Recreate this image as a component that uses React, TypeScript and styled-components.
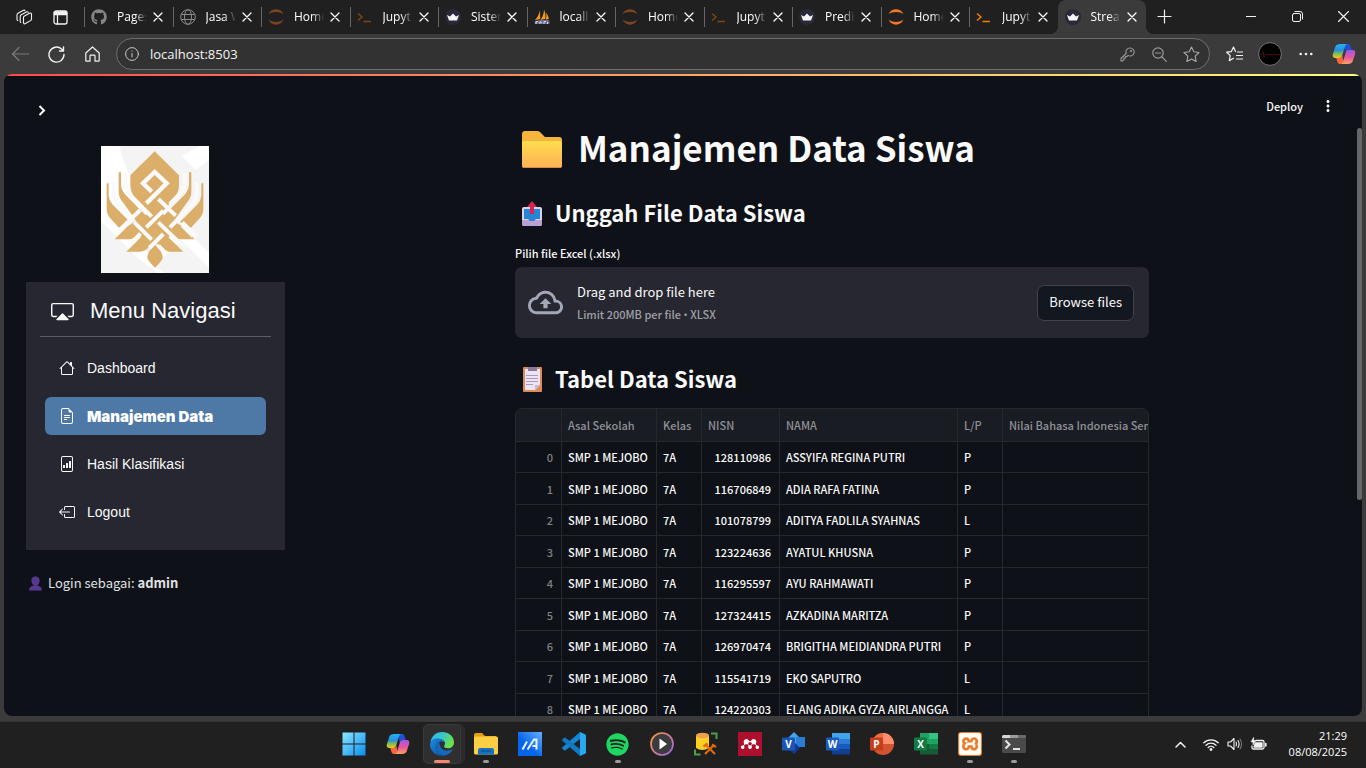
import React from "react";
import styled, { createGlobalStyle, css } from "styled-components";
import { FaGithub, FaSpotify } from "react-icons/fa";
import { BsCast, BsHouse, BsFileEarmarkText, BsFileBarGraph, BsBoxArrowLeft } from "react-icons/bs";
import { MdOutlineCloudUpload, MdMoreVert } from "react-icons/md";
import { SiXampp, SiMendeley } from "react-icons/si";

const shell = `"Open Sans", "Noto Sans", sans-serif`;
const source = `"Noto Sans CJK SC", "Noto Sans", sans-serif`;
const arial = `"Liberation Sans", Arial, sans-serif`;

const GlobalStyle = createGlobalStyle`
  * { box-sizing: border-box; }
  body { margin: 0; background: #202020; overflow: hidden; }
  button { border: 0; background: none; padding: 0; color: inherit; font: inherit; }
  svg { display: block; flex: none; }
`;

const Desktop = styled.div`
  display: flex;
  flex-direction: column;
  height: 100vh;
  color: #fff;
  font-family: ${shell};
`;

/* ---------- Browser window ---------- */

const TabStrip = styled.header`
  display: flex;
  height: 34px;
  background: #202020;
`;

const StripTools = styled.div`
  display: flex;
  align-items: center;
  width: 84px;
  padding-left: 6px;
`;

const IconButton = styled.button<{ $w?: number; $dim?: boolean }>`
  display: flex;
  align-items: center;
  justify-content: center;
  width: ${(p) => p.$w ?? 36}px;
  height: 32px;
  flex: none;
  color: ${(p) => (p.$dim ? "#7a7a7a" : "#f2f2f2")};
`;

const Tabs = styled.div`
  display: grid;
  grid-template-columns: repeat(12, 1fr);
  flex: 1;
`;

const TabItem = styled.div<{ $active?: boolean }>`
  position: relative;
  display: flex;
  align-items: center;
  min-width: 0;
  padding-left: 7px;
  ${(p) =>
    p.$active
      ? css`
          background: #3b3b3b;
          border-radius: 8px 8px 0 0;
          &::before,
          &::after {
            content: "";
            position: absolute;
            bottom: 0;
            width: 8px;
            height: 8px;
          }
          &::before {
            left: -8px;
            background: radial-gradient(circle at 0 0, transparent 8px, #3b3b3b 8px);
          }
          &::after {
            right: -8px;
            background: radial-gradient(circle at 100% 0, transparent 8px, #3b3b3b 8px);
          }
        `
      : css`
          &::before {
            content: "";
            position: absolute;
            left: 0;
            top: 7px;
            width: 1px;
            height: 20px;
            background: #666;
          }
        `}
`;

const TabLabel = styled.button`
  display: flex;
  align-items: center;
  gap: 10px;
  min-width: 0;
`;

const TabTitle = styled.span`
  width: 30px;
  overflow: hidden;
  white-space: nowrap;
  text-align: left;
  font-size: 12px;
  line-height: 18px;
  mask-image: linear-gradient(90deg, #000 60%, transparent 100%);
`;

const TabClose = styled.button`
  display: flex;
  margin-left: 6px;
`;

const WindowControls = styled.div`
  display: flex;
  justify-content: space-between;
  width: 220px;
`;

const CaptionButtons = styled.div`
  display: flex;
`;

const Toolbar = styled.div`
  display: flex;
  align-items: center;
  height: 40px;
  padding: 0 2px;
  background: #3b3b3b;
`;

const AddressBar = styled.div`
  display: flex;
  align-items: center;
  flex: 1;
  height: 32px;
  margin: 0 6px;
  padding: 0 2px 0 8px;
  border: 1px solid #6d6d6d;
  border-radius: 16px;
  background: #323232;
`;

const AddressInput = styled.input`
  flex: 1;
  min-width: 0;
  margin-left: 11px;
  padding: 0;
  border: 0;
  outline: 0;
  background: none;
  color: #f4f4f4;
  font-family: ${shell};
  font-size: 13px;
`;

const Frame = styled.div`
  display: flex;
  flex: 1;
  min-height: 0;
  padding: 0 4px 5px;
  background: #3b3b3b;
`;

const Viewport = styled.div`
  position: relative;
  display: flex;
  flex: 1;
  overflow: hidden;
  border-radius: 8px;
  background: #0e1117;
  color: #fafafa;
  font-family: ${source};
`;

const Decoration = styled.div`
  position: absolute;
  inset: 0 0 auto;
  height: 2px;
  background: linear-gradient(90deg, #ff4b4b, #fffd80);
`;

const ScrollThumb = styled.div`
  position: absolute;
  top: 54px;
  right: 0;
  width: 5px;
  height: 58%;
  border-radius: 3px;
  background: #66676b;
`;

/* ---------- Sidebar ---------- */

const Sidebar = styled.aside`
  display: flex;
  flex-direction: column;
  flex: none;
  width: 298px;
  padding: 22px 17px 0 22px;
`;

const CollapseButton = styled.button`
  display: flex;
  align-items: center;
  justify-content: center;
  width: 32px;
  height: 28px;
`;

const LogoBox = styled.div`
  display: flex;
  margin: 22px 0 9px 75px;
`;

const Menu = styled.nav`
  padding: 14px 14px 19px;
  background: #262730;
  font-family: ${arial};
`;

const MenuTitle = styled.div`
  display: flex;
  align-items: center;
  gap: 16px;
  height: 41px;
  padding: 0 0 10px 11px;
  border-bottom: 1px solid #5c5d65;
  font-size: 22px;
  line-height: 30px;
`;

const MenuList = styled.ul`
  display: flex;
  flex-direction: column;
  gap: 10px;
  margin: 12px 5px 0;
  padding: 0;
  list-style: none;
`;

const MenuLink = styled.a<{ $active?: boolean }>`
  display: flex;
  align-items: center;
  gap: 12px;
  height: 38px;
  padding: 0 14px;
  border-radius: 6px;
  color: #fafafa;
  text-decoration: none;
  font-size: 14px;
  ${(p) =>
    p.$active &&
    css`
      background: #4e79a7;
      color: #fff;
      font-family: Inter, sans-serif;
      font-size: 15px;
      font-weight: 900;
    `}
`;

const LoginNote = styled.p`
  display: flex;
  align-items: center;
  gap: 5px;
  margin: 23px 0 0 2px;
  font-size: 13px;
  line-height: 20px;
  color: #e0e0e3;
`;

/* ---------- Main column ---------- */

const Main = styled.main`
  flex: 1;
  min-width: 0;
`;

const AppHeader = styled.div`
  display: flex;
  justify-content: flex-end;
  align-items: center;
  gap: 16px;
  height: 52px;
  padding: 12px 25px 0 0;
  font-size: 11px;
  font-weight: 500;
  line-height: 18px;
`;

const Column = styled.div`
  width: 100%;
  max-width: 634px;
  margin: 0 auto;
`;

const Title = styled.h1`
  display: flex;
  align-items: flex-start;
  gap: 16px;
  height: 46px;
  margin: 0;
  padding-left: 7px;
  font-size: 35px;
  font-weight: 700;
  line-height: 42px;

  svg { margin-top: 5px; }
`;

const Subtitle = styled.h2`
  display: flex;
  align-items: flex-start;
  gap: 12px;
  height: 30px;
  margin: 26px 0 0;
  padding-left: 7px;
  font-size: 22px;
  font-weight: 600;
  line-height: 28px;

  svg { margin-top: 3px; }
`;

const FieldLabel = styled.label`
  display: block;
  margin: 16px 0 5px;
  font-size: 11px;
  font-weight: 500;
  line-height: 18px;
`;

const HiddenInput = styled.input`
  position: absolute;
  width: 1px;
  height: 1px;
  opacity: 0;
`;

const Dropzone = styled.section`
  display: flex;
  align-items: center;
  gap: 14px;
  height: 71px;
  padding: 0 15px 0 13px;
  border-radius: 7px;
  background: #262730;
  color: #a3a8b8;
`;

const DropText = styled.div`
  flex: 1;
  padding-top: 1px;
  color: #fafafa;
  font-size: 13px;
  line-height: 22px;
`;

const DropHint = styled.small`
  display: block;
  color: #a0a0a6;
  font-size: 11px;
  font-weight: 500;
  line-height: 22px;
`;

const Bullet = styled.span`
  font-family: ${shell};
`;

const BrowseButton = styled.button`
  height: 36px;
  padding: 0 11px 2px;
  border: 1px solid #41434b;
  border-radius: 7px;
  background: #131720;
  color: #fafafa;
  font-size: 13px;
`;

const TableFrame = styled.div`
  margin-top: 14px;
  overflow: hidden;
  border: 1px solid #26282e;
  border-radius: 7px;
`;

const Table = styled.table`
  width: 790px;
  table-layout: fixed;
  border-spacing: 0;
  font-size: 11px;
  line-height: 16px;
  white-space: nowrap;

  th,
  td {
    padding: 0 8px 0 6px;
    border-right: 1px solid #26282e;
    border-bottom: 1px solid #26282e;
    text-align: left;
    font-weight: 500;
  }
  thead th {
    height: 33px;
    background: #1a1c23;
    color: #8f9197;
  }
  tbody tr { height: 32px; }
  tbody tr:nth-child(odd) { height: 31px; }
  tbody th {
    color: #7f8186;
    text-align: right;
  }
  td:nth-child(4) { text-align: right; }
`;

/* ---------- Taskbar ---------- */

const Taskbar = styled.footer`
  display: grid;
  grid-template-columns: 1fr auto 1fr;
  height: 47px;
  padding-bottom: 2px;
  background: #202020;
  border-top: 1px solid #343434;
`;

const Dock = styled.div`
  grid-column: 2;
  display: flex;
  padding-left: 1px;
`;

const DockButton = styled.button<{ $state?: "open" | "active" }>`
  position: relative;
  display: flex;
  align-items: center;
  justify-content: center;
  width: 44px;
  height: 44px;
  ${(p) =>
    p.$state &&
    css`
      &::after {
        content: "";
        position: absolute;
        left: 50%;
        bottom: 3px;
        width: ${p.$state === "active" ? 16 : 6}px;
        height: 3px;
        border-radius: 2px;
        background: ${p.$state === "active" ? "#f7886c" : "#9a9a9a"};
        transform: translateX(-50%);
      }
    `}
  ${(p) =>
    p.$state === "active" &&
    css`
      &::before {
        content: "";
        position: absolute;
        inset: 2px 3px 2px 3px;
        border: 1px solid #3a3a3a;
        border-radius: 5px;
        background: #2f2f2f;
        box-shadow: 4px 0 0 #2b2b2b;
      }
    `}
  svg { position: relative; }
`;

const Tray = styled.div`
  display: flex;
  align-items: center;
  justify-content: flex-end;
  padding-right: 19px;
`;

const Clock = styled.time`
  margin-left: 18px;
  text-align: right;
  font-size: 11px;
  line-height: 16px;
`;

/* ---------- Drawings ---------- */

const line = { fill: "none", stroke: "currentColor", strokeLinecap: "round", strokeLinejoin: "round" } as const;

const CloseGlyph = () => (
  <svg width="10" height="10" viewBox="0 0 10 10" {...line} strokeWidth="1.3"><path d="M1 1l8 8M9 1L1 9" /></svg>
);

const JupyterIcon = ({ dim }: { dim?: boolean }) => (
  <svg width="16" height="16" viewBox="0 0 16 16" fill={dim ? "#7d4420" : "#f37726"}>
    <path d="M.6 5.400C1.800 2 4.700.300 8 .300s6.200 1.700 7.400 5.100C13.700 3.800 11 3 8 3S2.300 3.800.600 5.400z" />
    <path d="M.6 10.600C1.800 14 4.700 15.700 8 15.700s6.200-1.700 7.400-5.100C13.700 12.200 11 13 8 13s-5.700-.8-7.400-2.400z" />
  </svg>
);

const PromptIcon = ({ dim }: { dim?: boolean }) => (
  <svg width="16" height="16" viewBox="0 0 16 16" fill="none" stroke={dim ? "#7b460f" : "#f57c00"} strokeWidth="1.500">
    <path d="M1 4.500l4 3.500-4 3.500M6.500 12.500H14" />
  </svg>
);

const CrownIcon = () => (
  <svg width="16" height="16" viewBox="0 0 16 16">
    <circle cx="8" cy="8" r="8" fill="#2a2939" />
    <path d="M2 6l3 1.500L8 4.500l3 3L14 6l-2 5.500H4z" fill="#f6f6f6" />
  </svg>
);

const GlobeIcon = () => (
  <svg width="16" height="16" viewBox="0 0 16 16" fill="none" stroke="#8a8a8a" strokeWidth="1">
    <circle cx="8" cy="8" r="7.300" /><ellipse cx="8" cy="8" rx="3.500" ry="7.300" /><path d="M1.300 5.500h13.400M1.300 10.500h13.400" />
  </svg>
);

const SailIcon = () => (
  <svg width="16" height="16" viewBox="0 0 16 16">
    <path d="M6 1Q5 7 .8 11.200L6.200 10zM10 .3Q10 6 6.500 11l5-1.200Q12 5 10 .3zM12 3.500q2.500 3 2.800 6.500l-3 .8Q13 7 12 3.500z" fill="#f39a20" />
    <path d="M.5 12.500q7-3 15-1v3.500H1z" fill="#6a6c94" />
    <path d="M2 15v-2.500h2M6 15v-2.500l2 1.500M10 15v-2.500h2M13.500 13v2" stroke="#d5d6ea" fill="none" />
  </svg>
);

const CopilotIcon = ({ size }: { size: number }) => (
  <svg width={size} height={size} viewBox="0 0 24 24">
    <defs>
      <linearGradient id="cpA" x1="0" y1="0" x2="0" y2="1"><stop offset="0" stopColor="#21b4ee" /><stop offset=".45" stopColor="#2b8fe0" /><stop offset=".7" stopColor="#7fc04c" /><stop offset="1" stopColor="#f5c321" /></linearGradient>
      <linearGradient id="cpB" x1="0" y1="0" x2="0" y2="1"><stop offset="0" stopColor="#a554e8" /><stop offset=".55" stopColor="#e9589a" /><stop offset="1" stopColor="#ffa35c" /></linearGradient>
    </defs>
    <path d="M12.500 2h3.700c1.500 0 2 1 2.400 2.200L19.800 8h-3.300c-1.600 0-2.500.8-3 2.400z" fill="#1f50d8" />
    <path d="M11.500 22H7.800c-1.500 0-2-1-2.400-2.200L4.200 16h3.300c1.600 0 2.500-.8 3-2.400z" fill="#f7683a" />
    <path d="M8.400 2h7.100c-1.300 0-2 1-2.500 2.600l-2.800 9C9.700 15.200 8.800 16 7.200 16H3.400C.9 16 .2 14.200.9 12L3.400 4.500C4 2.900 5.500 2 8.400 2z" fill="url(#cpA)" />
    <path d="M15.600 22H8.500c1.300 0 2-1 2.500-2.600l2.800-9C14.300 8.800 15.200 8 16.800 8h3.800c2.500 0 3.200 1.800 2.500 4l-2.500 7.500c-.6 1.600-2.100 2.500-5 2.500z" fill="url(#cpB)" />
  </svg>
);

const SchoolLogo = () => (
  <svg width="108" height="127" viewBox="0 0 324 381" role="img" aria-label="Logo">
    <rect width="324" height="381" fill="#fff" />
    <path d="M55 0h240l-52 30 40 42 41-30v278L180 180V381H0V225l60 20L150 160Q80 110 55 0z" fill="#f4f4f4" />
    <path d="M0 225L110 335l60 46h30L60 235z" fill="#fff" />
    <path d="M190 381l-30-20 80-80 84 84v16z" fill="#f4f4f4" />
    <g fill="#dbae6a">
      <path d="M161 16L234 88v30q0 22-16 40L161 225 104 158Q88 140 88 118V88z" />
      <path d="M53 79h7v38q1 16 14 30l110 112-35 28L68 172Q53 156 53 138z" />
      <path d="M271 79h-7v38q-1 16-14 30L138 259l37 28 81-115q15-16 15-34z" />
      <path d="M17 112h6v36q2 18 14 30l50 50-33 17-24-26Q17 205 17 188z" />
      <path d="M307 112h-6v36q-2 18-14 30l-50 50 33 17 24-26q13-14 13-31z" />
      <path d="M162 190l80 50 39 40h-44q-15-1-25-12l-50 30-50-30q-10 11-25 12H41l40-40z" />
      <path d="M76 317l84-84 87 84h-42q-15-2-25-14l-18-18-18 18q-10 12-25 14z" />
      <path d="M162 297q23 20 23 37 0 10-23 31-23-21-23-31 0-17 23-37z" />
    </g>
    <g fill="none" stroke="#fafafa" strokeWidth="12">
      <path d="M152 137l-26-25 35-34 36 34-61 60" strokeWidth="13" />
      <path d="M74 82v34q2 18 16 34l62 62M251 82v34q-2 18-45 58M38 108v36q2 18 14 32l32 34M287 108v36q-2 18-14 32l-66 68" />
      <path d="M172 159l52 50M118 192l-64 62M187 194l-51 50M100 229l52 52M172 229l64 62q10 8 20 8M244 229l42 42M187 264l-42 42M118 262q-16 22-35 26M172 299l20 20M244 238l32 32" />
    </g>
  </svg>
);

const FolderEmoji = () => (
  <svg width="40" height="37" viewBox="0 0 40 37">
    <defs><linearGradient id="fold" x2="0" y2="1"><stop stopColor="#ffdd4e" /><stop offset="1" stopColor="#fdb055" /></linearGradient></defs>
    <path d="M0 3q0-3 3-3h12q2 0 3 1l5 5h14q3 0 3 3v8H0z" fill="#f5b53c" />
    <rect y="10" width="40" height="27" rx="2" fill="url(#fold)" />
    <path d="M1 36.500h38" stroke="#d98848" />
  </svg>
);

const OutboxEmoji = () => (
  <svg width="21" height="25" viewBox="0 0 21 25">
    <rect y="6" width="20" height="19" rx="2" fill="#dcd3e9" />
    <path d="M0 19h20v4q0 2-2 2H2q-2 0-2-2z" fill="#b9a1d4" />
    <path d="M2 8h16v10h-4l-2 2H8l-2-2H2z" fill="#2586d8" />
    <path d="M10 0l5 6h-3v7H8V6H5z" fill="#d9244f" />
  </svg>
);

const ClipboardEmoji = () => (
  <svg width="21" height="25" viewBox="0 0 21 25">
    <rect x="1" width="19" height="25" rx="1" fill="#dc8a56" />
    <path d="M3 2h15v16l-5 5H3z" fill="#ece4f4" />
    <path d="M18 18l-5 5v-5z" fill="#c9b8de" />
    <path d="M6 0h9v4H6z" fill="#8a7a9a" />
    <path d="M4 8.500h12M4 11.500h12M4 14.500h12M4 17.500h7" stroke="#a79bb8" />
  </svg>
);

const PersonEmoji = () => (
  <svg width="15" height="15" viewBox="0 0 15 15" fill="#57378f">
    <path d="M7.500.5c3 0 4.500 2 4 5-.4 2.500-2 4.500-4 4.500s-3.600-2-4-4.500c-.5-3 1-5 4-5z" />
    <path d="M1 14.500c0-4 3-4.500 5-5h3c2 .5 5 1 5 5z" />
  </svg>
);

const Office = ({ letter, dark, children }: { letter: string; dark: string; children: React.ReactNode }) => (
  <svg width="24" height="24" viewBox="0 0 24 24">
    {children}
    <rect y="5.500" width="13" height="13" rx="1" fill={dark} />
    <text x="6.500" y="15.500" textAnchor="middle" fontFamily="Open Sans" fontWeight="700" fontSize="10" fill="#fff">{letter}</text>
  </svg>
);

/* ---------- Data ---------- */

const tabs: { title: string; icon: React.ReactNode; active?: boolean }[] = [
  { title: "Pages", icon: <FaGithub size={16} color="#858585" /> },
  { title: "Jasa W", icon: <GlobeIcon /> },
  { title: "Home", icon: <JupyterIcon dim /> },
  { title: "Jupyt", icon: <PromptIcon dim /> },
  { title: "Sister", icon: <CrownIcon /> },
  { title: "locall", icon: <SailIcon /> },
  { title: "Home", icon: <JupyterIcon dim /> },
  { title: "Jupyt", icon: <PromptIcon dim /> },
  { title: "Predi", icon: <CrownIcon /> },
  { title: "Home", icon: <JupyterIcon /> },
  { title: "Jupyt", icon: <PromptIcon /> },
  { title: "Strea", icon: <CrownIcon />, active: true },
];

const menu = [
  { label: "Dashboard", Icon: BsHouse },
  { label: "Manajemen Data", Icon: BsFileEarmarkText, active: true },
  { label: "Hasil Klasifikasi", Icon: BsFileBarGraph },
  { label: "Logout", Icon: BsBoxArrowLeft },
];

const columns: [string, number][] = [
  ["", 46], ["Asal Sekolah", 95], ["Kelas", 45], ["NISN", 78], ["NAMA", 178], ["L/P", 45],
  ["Nilai Bahasa Indonesia Semester 1", 303],
];

const students = [
  ["128110986", "ASSYIFA REGINA PUTRI", "P"],
  ["116706849", "ADIA RAFA FATINA", "P"],
  ["101078799", "ADITYA FADLILA SYAHNAS", "L"],
  ["123224636", "AYATUL KHUSNA", "P"],
  ["116295597", "AYU RAHMAWATI", "P"],
  ["127324415", "AZKADINA MARITZA", "P"],
  ["126970474", "BRIGITHA MEIDIANDRA PUTRI", "P"],
  ["115541719", "EKO SAPUTRO", "L"],
  ["124220303", "ELANG ADIKA GYZA AIRLANGGA", "L"],
];

const dock: { name: string; state?: "open" | "active"; icon: React.ReactNode }[] = [
  { name: "Start", icon: (
    <svg width="24" height="24" viewBox="0 0 24 24">
      <defs><linearGradient id="win" x2="1" y2="1"><stop stopColor="#8be8ff" /><stop offset="1" stopColor="#0a8cf0" /></linearGradient></defs>
      <path d="M.5.5h11v11H.5zM12.500.5h11v11h-11zM.5 12.500h11v11H.5zM12.500 12.500h11v11h-11z" fill="url(#win)" />
    </svg>) },
  { name: "Copilot", icon: <CopilotIcon size={24} /> },
  { name: "Edge", state: "active", icon: (
    <svg width="24" height="24" viewBox="0 0 24 24">
      <defs>
        <linearGradient id="edA" x2="1" y2=".4"><stop stopColor="#2fb4ea" /><stop offset=".5" stopColor="#33c8d0" /><stop offset="1" stopColor="#6be04a" /></linearGradient>
        <linearGradient id="edB" x2="1" y2="1"><stop stopColor="#1a8ae0" /><stop offset="1" stopColor="#0d4f9e" /></linearGradient>
      </defs>
      <path d="M.5 10C1.500 4 6 0 12 0c7 0 12 4.500 12 10.500 0 3.500-2.700 5.800-6 5.800-2.500 0-4-1-4-2 0-.8 1-1.200 1-3 0-2.500-3-4.300-6.500-4.300C4.500 7 1.500 8.500.5 10z" fill="url(#edA)" />
      <path d="M.3 10.500C1.500 7.500 5 6 8.500 6.500c4 .5 6.500 3 6.500 5-.5-1.300-2-2-3.500-2-3 0-5 2.500-5 6 0 4 3.500 7.500 7.500 8C6 25 0 19 0 12.500z" fill="url(#edB)" />
      <path d="M9.500 10.200c-2 1.200-3 3.300-3 5.300 0 4.500 4 8 8.500 8 3.300-.8 6-2.600 7.600-5.300.3-.5-.1-.8-.6-.6-5.500 2.400-12.500.6-12.500-7.400z" fill="#1368bf" />
    </svg>) },
  { name: "File Explorer", state: "open", icon: (
    <svg width="24" height="24" viewBox="0 0 24 24">
      <path d="M0 3q0-2 2-2h6l3 3h11v6H0z" fill="#e0a010" />
      <rect y="4.500" width="24" height="18" rx="1.500" fill="#fdcf45" />
      <path d="M4 22.500V18q0-2 2-2h12q2 0 2 2v4.500z" fill="#1673c4" /><path d="M7 19h10" stroke="#0c559a" strokeWidth="1.500" />
    </svg>) },
  { name: "MyASUS", icon: (
    <svg width="24" height="24" viewBox="0 0 24 24">
      <defs><linearGradient id="asus" x1="0" y1="1" x2="1" y2="0"><stop offset=".4" stopColor="#0565e8" /><stop offset="1" stopColor="#68adff" /></linearGradient></defs>
      <rect width="24" height="24" fill="url(#asus)" />
      <path d="M4.500 17.500l4.500-8M9.500 17.500L16 7.500h2.500v10M14.500 14h3" fill="none" stroke="#e8f2ff" strokeWidth="2" />
    </svg>) },
  { name: "Visual Studio Code", icon: (
    <svg width="24" height="24" viewBox="0 0 24 24">
      <path d="M18 0l5 2.300q1 .5 1 1.500v16.400q0 1-1 1.500L18 24z" fill="#29a8f2" />
      <path d="M18 0v7L3.500 18.300q-.7.500-1.300 0L.4 16.700q-.7-.7 0-1.400z" fill="#1286d4" />
      <path d="M18 24v-7L3.500 5.700q-.7-.5-1.300 0L.4 7.300q-.7.700 0 1.400z" fill="#0f79c6" />
    </svg>) },
  { name: "Spotify", state: "open", icon: <FaSpotify size={23} color="#1ed760" /> },
  { name: "Media Player", icon: (
    <svg width="24" height="24" viewBox="0 0 24 24">
      <defs><linearGradient id="med" x2="1" y2="1"><stop stopColor="#ff9b3d" /><stop offset="1" stopColor="#9a62e0" /></linearGradient></defs>
      <circle cx="12" cy="12" r="11" fill="#3b3b40" stroke="url(#med)" strokeWidth="1.700" /><path d="M9.500 6.500v11l7.500-5.500z" fill="#fff" />
    </svg>) },
  { name: "Database Tools", icon: (
    <svg width="24" height="24" viewBox="0 0 24 24">
      <path d="M2 4v12q6 4 13 0V4z" fill="#fbcf24" /><ellipse cx="8.500" cy="3.500" rx="6.500" ry="2.700" fill="#f0a04c" />
      <path d="M17 1.500h5.500V7M1 17.500v5h5.500" fill="none" stroke="#4ba046" strokeWidth="2" />
      <path d="M11 22l9-9M12 13l9 9M9.500 14.500l4-3M18 12.500l4 2.500" stroke="#e4690b" strokeWidth="2.200" />
    </svg>) },
  { name: "Mendeley", icon: (
    <svg width="24" height="24" viewBox="0 0 24 24"><rect width="24" height="24" fill="#ad0f2c" /><SiMendeley x={3} y={3} size={18} color="#fff" /></svg>) },
  { name: "Visio", icon: (
    <Office letter="V" dark="#1b55b8"><path d="M12 0l7 7-7 7-7-7z" fill="#41a5ee" /><path d="M14 5h9v10h-9z" fill="#2b7cd3" /><path d="M12 10l6 6-6 6-6-6z" fill="#12398f" /></Office>) },
  { name: "Word", icon: (
    <Office letter="W" dark="#1a5bbd"><path d="M6 1h18v6H6z" fill="#41a5ee" /><path d="M6 7h18v5H6z" fill="#2b7cd3" /><path d="M6 12h18v5H6z" fill="#185abd" /><path d="M6 17h18v5.500H6z" fill="#103f91" /></Office>) },
  { name: "PowerPoint", icon: (
    <Office letter="P" dark="#c43e1c"><circle cx="13" cy="12" r="11" fill="#d35230" /><path d="M13 1v11h11A11 11 0 0013 1z" fill="#ff8f6b" /><path d="M13 1v11H2A11 11 0 0113 1z" fill="#ed6c47" /></Office>) },
  { name: "Excel", icon: (
    <Office letter="X" dark="#107c41"><path d="M6 1h9v11H6z" fill="#21a366" /><path d="M15 1h9v6h-9z" fill="#33c481" /><path d="M15 7h9v5h-9z" fill="#21a366" /><path d="M6 12h9v10.500H6z" fill="#185c37" /><path d="M15 12h9v5h-9z" fill="#107c41" /><path d="M15 17h9v5.500h-9z" fill="#185c37" /></Office>) },
  { name: "XAMPP", state: "open", icon: (
    <svg width="24" height="24" viewBox="0 0 24 24"><rect width="24" height="24" rx="3" fill="#f07a24" /><SiXampp x={1} y={1} size={22} color="#fff" /></svg>) },
  { name: "Terminal", state: "open", icon: (
    <svg width="24" height="24" viewBox="0 0 24 24">
      <rect y="3" width="24" height="18" rx="1.500" fill="#4a4a4a" /><path d="M0 6V4.500Q0 3 1.500 3H8v3z" fill="#d4d4d4" /><path d="M8 3h8v3H8z" fill="#9b9b9b" /><path d="M16 3h8v3h-8z" fill="#6a6a6a" />
      <path d="M3.500 8.500l4 4-4 4" fill="none" stroke="#e8e8e8" strokeWidth="2" /><path d="M11 17h7" stroke="#fff" strokeWidth="1.700" />
    </svg>) },
];

export default function App() {
  return (
    <Desktop>
      <GlobalStyle />
      <TabStrip>
        <StripTools>
          <IconButton aria-label="Workspaces">
            <svg width="17" height="17" viewBox="0 0 17 17" {...line} strokeWidth="1.100">
              <path d="M7.500 8.500q0-1 1-1.500l5-2.700q2-.8 2 1V10q0 1-1 1.600l-5 2.900q-2 1-2-1zM4.800 13.500q-.6-.3-.6-1.200V7.500q0-1 1-1.700L10.500 3q1.200-.5 1.700.3M1.800 11.500q-.8-.3-.8-1.300V5.800q0-1 1-1.600L7 1.400q1.500-.7 2 .3" />
            </svg>
          </IconButton>
          <IconButton aria-label="Tab actions">
            <svg width="15" height="15" viewBox="0 0 15 15" {...line} strokeWidth="1.300">
              <rect x="1" y="1" width="13" height="13" rx="2" /><path d="M1.500 2h12v2.500h-12z" fill="currentColor" /><path d="M4.500 5v9" />
            </svg>
          </IconButton>
        </StripTools>
        <Tabs>
          {tabs.map((t, i) => (
            <TabItem key={i} $active={t.active}>
              <TabLabel>{t.icon}<TabTitle>{t.title}</TabTitle></TabLabel>
              <TabClose aria-label={`Close ${t.title}`}><CloseGlyph /></TabClose>
            </TabItem>
          ))}
        </Tabs>
        <WindowControls>
          <IconButton aria-label="New tab">
            <svg width="15" height="15" viewBox="0 0 15 15" {...line} strokeWidth="1.200"><path d="M7.500 1v13M1 7.500h13" /></svg>
          </IconButton>
          <CaptionButtons>
            <IconButton $w={46} aria-label="Minimize"><svg width="10" height="10" viewBox="0 0 10 10" {...line}><path d="M0 5.500h10" /></svg></IconButton>
            <IconButton $w={46} aria-label="Restore">
              <svg width="11" height="11" viewBox="0 0 11 11" {...line}><rect x=".5" y="2.500" width="8" height="8" rx="1.500" /><path d="M3 .5h5q2.500 0 2.500 2.500v5" /></svg>
            </IconButton>
            <IconButton $w={46} aria-label="Close"><svg width="11" height="11" viewBox="0 0 11 11" {...line} strokeWidth="1.200"><path d="M.5.5l10 10M10.500.5l-10 10" /></svg></IconButton>
          </CaptionButtons>
        </WindowControls>
      </TabStrip>

      <Toolbar>
        <IconButton $dim aria-label="Back"><svg width="17" height="14" viewBox="0 0 17 14" {...line} strokeWidth="1.200"><path d="M7 .5L.5 7 7 13.500M.5 7h16" /></svg></IconButton>
        <IconButton aria-label="Reload"><svg width="17" height="17" viewBox="0 0 17 17" {...line} strokeWidth="1.400"><path d="M16 8.500A7.500 7.500 0 1113.500 3L15.500 5M15.500 1v4h-4" /></svg></IconButton>
        <IconButton aria-label="Home"><svg width="15" height="16" viewBox="0 0 15 16" {...line} strokeWidth="1.200"><path d="M.8 7L7.500 1l6.700 6v7.500q0 .7-.7.700H10V10q0-.8-.8-.8H5.800Q5 9.200 5 10v5.200H1.500q-.7 0-.7-.7z" /></svg></IconButton>
        <AddressBar>
          <svg width="14" height="14" viewBox="0 0 14 14" {...line} stroke="#c8c8c8"><circle cx="7" cy="7" r="6.400" /><path d="M7 6.500V10M7 4v.2" /></svg>
          <AddressInput aria-label="Address" defaultValue="localhost:8503" />
          <IconButton $w={32} $dim aria-label="Passwords"><svg width="15" height="15" viewBox="0 0 15 15" {...line} stroke="#9a9a9a" strokeWidth="1.100"><path d="M10 1a4 4 0 11-2 7.400L7 9.500H5.500V11H4v1.500L2.500 14H1v-2.500l5.200-5A4 4 0 0110 1z" /><circle cx="11" cy="4" r=".5" /></svg></IconButton>
          <IconButton $w={32} $dim aria-label="Zoom out"><svg width="15" height="15" viewBox="0 0 15 15" {...line} stroke="#9a9a9a" strokeWidth="1.200"><circle cx="6" cy="6" r="5.200" /><path d="M10 10l4.300 4.300M3.500 6h5" /></svg></IconButton>
          <IconButton $w={32} $dim aria-label="Add favorite"><svg width="17" height="17" viewBox="0 0 17 17" {...line} stroke="#a8a8a8" strokeWidth="1.100"><path d="M8.500 1l2.300 4.800 5.200.7-3.800 3.700.9 5.300-4.600-2.600-4.600 2.600.9-5.300L1 6.500l5.200-.7z" /></svg></IconButton>
        </AddressBar>
        <IconButton aria-label="Favorites"><svg width="17" height="16" viewBox="0 0 17 16" {...line} strokeWidth="1.200"><path d="M9.500 5.500L7.500 1 5.400 5.600.7 6.200l3.500 3.400-.9 5 4.200-2.300M11.500 6h5M10.500 9.500h6M10.500 13h6" /></svg></IconButton>
        <IconButton aria-label="Profile"><svg width="24" height="24" viewBox="0 0 24 24"><circle cx="12" cy="12" r="11.400" fill="#000" stroke="#777" /><path d="M2 12.500h2l1-3 1 6 1-3h15" fill="none" stroke="#4a0c0c" /></svg></IconButton>
        <IconButton aria-label="Settings"><svg width="14" height="4" viewBox="0 0 14 4" fill="currentColor"><circle cx="1.700" cy="2" r="1.300" /><circle cx="7" cy="2" r="1.300" /><circle cx="12.300" cy="2" r="1.300" /></svg></IconButton>
        <IconButton $w={40} aria-label="Copilot"><CopilotIcon size={24} /></IconButton>
      </Toolbar>

      <Frame>
        <Viewport>
          <Sidebar>
            <CollapseButton aria-label="Collapse sidebar">
              <svg width="8" height="11" viewBox="0 0 8 11" fill="none" stroke="#fafafa" strokeWidth="2"><path d="M1.500 1l4.500 4.500L1.500 10" /></svg>
            </CollapseButton>
            <LogoBox><SchoolLogo /></LogoBox>
            <Menu>
              <MenuTitle><BsCast size={23} />Menu Navigasi</MenuTitle>
              <MenuList>
                {menu.map(({ label, Icon, active }) => (
                  <li key={label}><MenuLink href="#" $active={active}><Icon size={16} />{label}</MenuLink></li>
                ))}
              </MenuList>
            </Menu>
            <LoginNote><PersonEmoji /><span>Login sebagai: <strong>admin</strong></span></LoginNote>
          </Sidebar>
          <Main>
            <AppHeader>
              <button>Deploy</button>
              <button aria-label="Main menu"><MdMoreVert size={18} /></button>
            </AppHeader>
            <Column>
              <Title><FolderEmoji />Manajemen Data Siswa</Title>
              <Subtitle><OutboxEmoji />Unggah File Data Siswa</Subtitle>
              <FieldLabel htmlFor="excel">Pilih file Excel (.xlsx)</FieldLabel>
              <Dropzone>
                <HiddenInput id="excel" type="file" accept=".xlsx" />
                <MdOutlineCloudUpload size={35} />
                <DropText>Drag and drop file here<DropHint>Limit 200MB per file <Bullet>•</Bullet> XLSX</DropHint></DropText>
                <BrowseButton>Browse files</BrowseButton>
              </Dropzone>
              <Subtitle><ClipboardEmoji />Tabel Data Siswa</Subtitle>
              <TableFrame>
                <Table>
                  <colgroup>{columns.map(([n, w]) => <col key={n} style={{ width: w }} />)}</colgroup>
                  <thead><tr>{columns.map(([n]) => <th key={n}>{n}</th>)}</tr></thead>
                  <tbody>
                    {students.map(([nisn, name, sex], i) => (
                      <tr key={nisn}>
                        <th scope="row">{i}</th><td>SMP 1 MEJOBO</td><td>7A</td><td>{nisn}</td><td>{name}</td><td>{sex}</td><td />
                      </tr>
                    ))}
                  </tbody>
                </Table>
              </TableFrame>
            </Column>
          </Main>
          <Decoration />
          <ScrollThumb />
        </Viewport>
      </Frame>

      <Taskbar>
        <Dock>
          {dock.map((d) => <DockButton key={d.name} $state={d.state} aria-label={d.name}>{d.icon}</DockButton>)}
        </Dock>
        <Tray>
          <IconButton aria-label="Hidden icons"><svg width="11" height="7" viewBox="0 0 11 7" {...line} strokeWidth="1.500"><path d="M1 6l4.500-4.500L10 6" /></svg></IconButton>
          <IconButton $w={24} aria-label="Network"><svg width="16" height="13" viewBox="0 0 16 13" {...line} strokeWidth="1.300"><path d="M.8 4.800a10.200 10.200 0 0114.400 0M3 7.200a7 7 0 0110 0M5.200 9.500a4 4 0 015.600 0" /><circle cx="8" cy="11.500" r=".8" fill="currentColor" /></svg></IconButton>
          <IconButton $w={24} aria-label="Volume"><svg width="16" height="14" viewBox="0 0 16 14" {...line} strokeWidth="1.100"><path d="M1 5h2.500L7 1.500v11L3.500 9H1zM9 5q1.200 2 0 4M11 3.500q2.200 3.500 0 7" /><path d="M13 2q3.200 5 0 10" stroke="#777" /></svg></IconButton>
          <IconButton $w={24} aria-label="Battery"><svg width="17" height="14" viewBox="0 0 17 14" {...line} strokeWidth="1.300"><path d="M6 3.500h6.500q1.500 0 1.500 1.500v5.500q0 1.500-1.500 1.500h-9Q2 12 2 10.500V9" /><path d="M5.500 6H12v4H4z" fill="currentColor" /><path d="M15.800 6.500v2.500" strokeWidth="1.600" /><path d="M3.500.5L1 5h2v3l3-4.500H4z" fill="currentColor" strokeWidth=".5" /></svg></IconButton>
          <Clock>21:29<br />08/08/2025</Clock>
        </Tray>
      </Taskbar>
    </Desktop>
  );
}
